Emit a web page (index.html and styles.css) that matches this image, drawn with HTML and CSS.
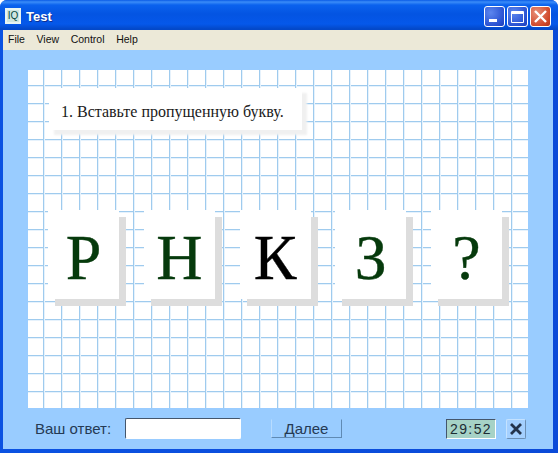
FILE: index.html
```html
<!DOCTYPE html>
<html>
<head>
    <meta charset="utf-8">
    <title>Test</title>
    <link rel="stylesheet" href="styles.css">
</head>
<body>
    <div class="window">
        <div class="titlebar">
            <div class="app-icon"><span>IQ</span></div>
            <div class="title">Test</div>
            <div class="win-btn">
                <svg width="21" height="21" viewBox="0 0 21 21"><rect x="5" y="13" width="8" height="3" fill="#fff"/></svg>
            </div>
            <div class="win-btn">
                <svg width="21" height="21" viewBox="0 0 21 21"><path d="M4.5 6.5h12v10h-12z M4.5 5.5h12v2h-12z" fill="none" stroke="#fff"/></svg>
            </div>
            <div class="win-btn win-close">
                <svg width="21" height="21" viewBox="0 0 21 21"><path d="M5 5l11 11M16 5L5 16" stroke="#fff" stroke-width="2.4"/></svg>
            </div>
        </div>
        <div class="menubar">
            <span>File</span>
            <span>View</span>
            <span>Control</span>
            <span>Help</span>
        </div>
        <div class="client">
            <div class="paper">
                <div class="question">1. Вставьте пропущенную букву.</div>
                <div class="cards">
                    <div class="card">Р</div>
                    <div class="card">Н</div>
                    <div class="card card-dark">К</div>
                    <div class="card">З</div>
                    <div class="card">?</div>
                </div>
            </div>
            <div class="bottom">
                <span class="answer-label">Ваш ответ:</span>
                <input class="answer-input" type="text">
                <button class="next-btn">Далее</button>
                <div class="timer">29:52</div>
                <button class="close-btn">
                    <svg width="14" height="14" viewBox="0 0 14 14"><path d="M2 2l10 10M12 2L2 12" stroke="#24344c" stroke-width="2.8"/></svg>
                </button>
            </div>
        </div>
    </div>
</body>
</html>
```

FILE: styles.css
```css
* {
    box-sizing: border-box;
    margin: 0;
    padding: 0;
}

html, body {
    width: 558px;
    height: 453px;
    overflow: hidden;
}

body {
    font-family: "Liberation Sans", Arial, sans-serif;
    background: #fff;
}

.window {
    display: flex;
    flex-direction: column;
    height: 453px;
    border-radius: 7px 7px 0 0;
    overflow: hidden;
    background: linear-gradient(to right, #0b52e2 0, #0a4ad8 100%);
}

.titlebar {
    display: flex;
    align-items: center;
    height: 30px;
    padding: 2px 7px 0 5px;
    background: linear-gradient(to bottom, #0a5be6 0, #3a8cf8 2px, #0a62ee 5px, #0454e2 14px, #0558ea 24px, #0348c8 29px, #0348c8 30px);
}

.app-icon {
    display: flex;
    align-items: center;
    justify-content: center;
    width: 16px;
    height: 16px;
    background: #cfe6e0;
    border: 2px solid #e8f4f2;
    color: #064a40;
    font-size: 10px;
    line-height: 1;
}

.title {
    flex: 1;
    margin-left: 5px;
    color: #fff;
    font-size: 13px;
    font-weight: bold;
    text-shadow: 1px 1px 0 #0f2f90;
}

.win-btn {
    width: 21px;
    height: 21px;
    margin-left: 2px;
    border: 1px solid #fff;
    border-radius: 3px;
    background: radial-gradient(circle at 30% 30%, #5c86ee, #2a52d2 70%, #1c3cb8);
    overflow: hidden;
}

.win-btn svg {
    display: block;
    margin: -1px;
}

.win-close {
    background: radial-gradient(circle at 30% 30%, #e8907a, #d0482a 70%, #b03418);
}

.menubar {
    display: flex;
    align-items: center;
    gap: 11.6px;
    height: 20px;
    margin: 0 5px 0 3px;
    padding: 0 0 2px 5px;
    background: #ece9d8;
    font-size: 10.5px;
    color: #111;
}

.client {
    flex: 1;
    display: flex;
    flex-direction: column;
    margin: 0 5px 4px 3px;
    padding: 20px 25px 0 25px;
    background: #99ccff;
}

.paper {
    height: 338px;
    padding: 18px 18px 0 18px;
    background-color: #fff;
    background-image:
        linear-gradient(to right, #9fcbee 1px, #e6f2fc 1px, #e6f2fc 2px, transparent 2px),
        linear-gradient(to bottom, #9fcbee 1px, #e6f2fc 1px, #e6f2fc 2px, transparent 2px);
    background-size: 18px 18px;
    background-position: 15px 15px;
}

.question {
    width: 253px;
    height: 42px;
    margin-left: 3px;
    padding: 15px 0 0 12px;
    background: #fff;
    box-shadow: 5px 5px 2px #f0f0f0;
    font-family: "Liberation Serif", "Times New Roman", serif;
    font-size: 16px;
    line-height: 18px;
    color: #1a1a1a;
}

.cards {
    display: flex;
    gap: 24.75px;
    margin-top: 80px;
    margin-left: 2px;
}

.card {
    width: 71px;
    height: 89px;
    background: #fff;
    box-shadow: 7px 7px 0 #dddddd;
    text-align: center;
    font-family: "Liberation Serif", "Times New Roman", serif;
    font-size: 64px;
    line-height: 96px;
    color: #063a0c;
    -webkit-text-stroke: 0.4px currentColor;
}

.card-dark {
    color: #000;
}

.bottom {
    flex: 1;
    display: flex;
    align-items: center;
    padding-left: 7px;
    font-size: 15px;
    color: #253a54;
}

.answer-label {
    width: 90px;
}

.answer-input {
    width: 116px;
    height: 21px;
    margin-right: 30px;
    background: #fff;
    border: 1px solid #fff;
    border-top-color: #44566c;
    border-left-color: #44566c;
    border-radius: 2px;
}

.next-btn {
    width: 71px;
    height: 19px;
    margin-right: 104px;
    background: #99ccff;
    border: 1px solid #5f8ab4;
    border-top-color: #99ccff;
    border-left-color: #b8dcff;
    font-family: inherit;
    font-size: 15px;
    line-height: 15px;
    color: #253a54;
}

.timer {
    width: 50px;
    height: 20px;
    margin-right: 10px;
    background: #a6d2c6;
    border: 1px solid #fff;
    border-top-color: #44566c;
    border-left-color: #44566c;
    text-align: center;
    font-size: 14px;
    line-height: 18px;
    letter-spacing: 1.4px;
    color: #1c2c34;
}

.close-btn {
    display: flex;
    align-items: center;
    justify-content: center;
    width: 20px;
    height: 20px;
    background: #a4d0ff;
    border: 1px solid #6c8fb4;
    border-top-color: #c4e2ff;
    border-left-color: #c4e2ff;
    border-radius: 2px;
}
```
